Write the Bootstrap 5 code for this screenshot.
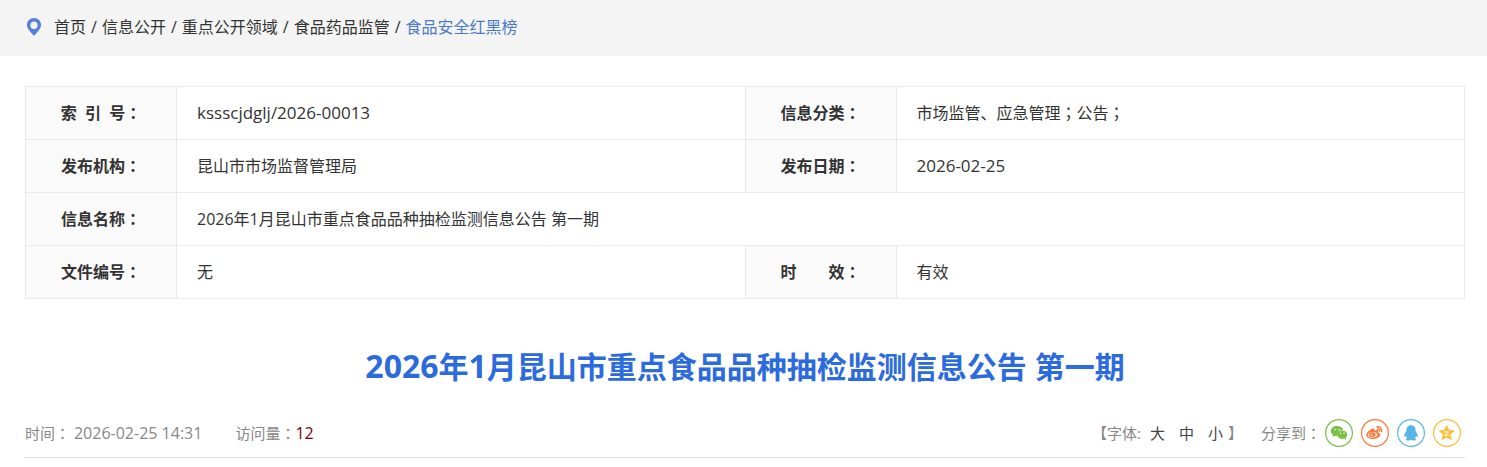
<!DOCTYPE html>
<html lang="zh-CN">
<head>
<meta charset="utf-8">
<meta name="viewport" content="width=device-width, initial-scale=1">
<title>2026年1月昆山市重点食品品种抽检监测信息公告 第一期</title>
<link href="https://cdn.jsdelivr.net/npm/bootstrap@5.3.0/dist/css/bootstrap.min.css" rel="stylesheet">
<style>
body { font-family: "Open Sans", "Noto Sans CJK SC", sans-serif; font-size: 16px; line-height: 24px; color: #333; background: #fff; }
a { color: inherit; text-decoration: none; }
/* full-width punctuation set in the middle of its cell */
.zh-mid { font-family: "Noto Sans CJK TC", sans-serif; line-height: 1; }
.page-gutter { padding-left: 25px; padding-right: 22px; }
.path-bar { background: #f4f4f4; min-height: 56px; padding-bottom: 2px; }
.path-bar .breadcrumb { --bs-breadcrumb-item-padding-x: 5px; --bs-breadcrumb-divider-color: #333; --bs-breadcrumb-item-active-color: #4a7bc8; margin-left: 11px; }
.info-table { table-layout: fixed; border-color: #eaeaea; margin: 30px 0 0; --bs-table-color: #333; }
.info-table th, .info-table td { padding: 14px 20px; line-height: 24px; border: 1px solid #eaeaea; }
.info-table th { background: #fafafa; text-align: center; white-space: nowrap; padding: 14px 0; }
.info-table .col-label { width: 151px; }
.info-table .latin { font-size: 17px; line-height: 1; }
.doc-title { font-size: 30px; line-height: 44px; font-weight: 700; color: #2b6bdd; margin: 46px 0 0; text-align: center; }
.doc-title .num { font-size: 32px; line-height: 1; }
.doc-meta { font-size: 15px; line-height: 22px; color: #888; border-bottom: 1px solid #ddd; margin-top: 30px; padding: 0 4px 10px 0; }
.doc-meta .latin { font-size: 16px; line-height: 1; }
.doc-meta .visit-count { margin-left: 33px; }
.visits { color: #800000; }
.size-links { gap: 14px; color: #444; margin: 0 5px 0 9px; }
.share-label { margin-left: 18px; }
.share-icon { width: 28px; height: 28px; display: block; }
</style>
</head>
<body>
<nav class="path-bar page-gutter d-flex align-items-center" aria-label="breadcrumb">
  <svg width="18" height="20" viewBox="0 0 18 20" aria-hidden="true"><path fill="#5282d8" fill-rule="evenodd" d="M9 1C4.900 1 2 4 2 7.900 2 12.200 6.500 15.500 9 19c2.500-3.500 7-6.800 7-11.100C16 4 13.100 1 9 1Zm0 3.500a3.600 3.800 0 1 1 0 7.600 3.600 3.800 0 0 1 0-7.600Z"/></svg>
  <ol class="breadcrumb mb-0">
    <li class="breadcrumb-item"><a href="#">首页</a></li>
    <li class="breadcrumb-item"><a href="#">信息公开</a></li>
    <li class="breadcrumb-item"><a href="#">重点公开领域</a></li>
    <li class="breadcrumb-item"><a href="#">食品药品监管</a></li>
    <li class="breadcrumb-item active" aria-current="page"><a href="#">食品安全红黑榜</a></li>
  </ol>
</nav>
<main class="page-gutter">
  <table class="table info-table">
    <colgroup><col class="col-label"><col><col class="col-label"><col></colgroup>
    <tbody>
      <tr><th scope="row">索&nbsp;&nbsp;引&nbsp;&nbsp;号<span class="zh-mid" lang="zh-TW">：</span></th><td><span class="latin">kssscjdglj/2026-00013</span></td><th scope="row">信息分类<span class="zh-mid" lang="zh-TW">：</span></th><td>市场监管、应急管理<span class="zh-mid" lang="zh-TW">；</span>公告<span class="zh-mid" lang="zh-TW">；</span></td></tr>
      <tr><th scope="row">发布机构<span class="zh-mid" lang="zh-TW">：</span></th><td>昆山市市场监督管理局</td><th scope="row">发布日期<span class="zh-mid" lang="zh-TW">：</span></th><td><span class="latin">2026-02-25</span></td></tr>
      <tr><th scope="row">信息名称<span class="zh-mid" lang="zh-TW">：</span></th><td colspan="3">2026年1月昆山市重点食品品种抽检监测信息公告 第一期</td></tr>
      <tr><th scope="row">文件编号<span class="zh-mid" lang="zh-TW">：</span></th><td>无</td><th scope="row">时　　效<span class="zh-mid" lang="zh-TW">：</span></th><td>有效</td></tr>
    </tbody>
  </table>
  <h1 class="doc-title"><span class="num">2026</span>年<span class="num">1</span>月昆山市重点食品品种抽检监测信息公告 第一期</h1>
  <div class="doc-meta d-flex flex-wrap justify-content-between align-items-center">
    <div class="d-flex">
      <span>时间<span class="zh-mid" lang="zh-TW">：</span> <span class="latin">2026-02-25 14:31</span></span>
      <span class="visit-count">访问量<span class="zh-mid" lang="zh-TW">：</span><span class="visits latin">12</span></span>
    </div>
    <div class="d-flex align-items-center">
      <span>【字体:</span>
      <span class="size-links d-flex"><a href="#">大</a><a href="#">中</a><a href="#">小</a></span>
      <span>】</span>
      <span class="share-label">分享到<span class="zh-mid" lang="zh-TW">：</span></span>
      <span class="d-flex gap-2 ms-1">
        <a href="#" aria-label="微信"><svg class="share-icon" viewBox="0 0 28 28"><circle cx="14" cy="14" r="13.400" fill="#fff" stroke="#7ac143" stroke-width="1.200"/><path fill="#7ac143" d="M12 7c-3.500 0-6.200 2.200-6.200 5 0 1.600.9 3 2.300 3.900L7.500 18l2.400-1.300c.7.200 1.400.3 2.100.3h.4c-.6-3.500 2.300-6.300 5.800-6.200C17.500 8.600 15 7 12 7Z"/><path fill="#7ac143" d="M17.200 11.400c-2.900 0-5 1.900-5 4.200s2.100 4.300 5 4.300c.6 0 1.200-.1 1.800-.3l2 1.200-.5-1.900c1.100-.8 1.800-2 1.800-3.300 0-2.300-2.200-4.200-5.100-4.200Z"/><g fill="#fff"><circle cx="10" cy="10.500" r=".8"/><circle cx="14.200" cy="10.500" r=".8"/><circle cx="15.600" cy="14.300" r=".7"/><circle cx="19" cy="14.300" r=".7"/></g></svg></a>
        <a href="#" aria-label="微博"><svg class="share-icon" viewBox="0 0 28 28"><circle cx="14" cy="14" r="13.400" fill="#fff" stroke="#ff763b" stroke-width="1.200"/><path fill="#ff763b" fill-rule="evenodd" d="M17 13.600c.7-1.600.2-2.500-1-2.500-.8 0-1.600.2-2.600.6.500-1.600 0-2.400-1.300-2.300-2.600.2-6.800 4-6.800 6.700 0 2.300 3 4 6.600 4 4.200 0 7.300-2.200 7.300-4.300 0-1.200-.9-1.900-2.200-2.200Zm-5.100 5.200c-2.800.2-5-.9-5.100-2.600-.1-1.600 1.900-3.100 4.600-3.300 2.700-.2 4.900.9 5 2.500.1 1.700-1.800 3.200-4.500 3.400Z"/><path fill="#ff763b" fill-rule="evenodd" d="M11.600 13.300c-2.100 0-3.700 1.300-3.700 2.900 0 1.400 1.300 2.300 3.100 2.200 2.100-.1 3.700-1.500 3.600-3 0-1.300-1.200-2.100-3-2.100Zm-1 3.900a1 1 0 1 1 0-2 1 1 0 0 1 0 2Z"/><path fill="none" stroke="#ff763b" stroke-width="1.500" stroke-linecap="round" d="M16.200 7.800c2.800-.5 5 1.900 4.200 4.800M16.600 10.100c1.200-.2 2 .7 1.700 1.900"/></svg></a>
        <a href="#" aria-label="QQ"><svg class="share-icon" viewBox="0 0 28 28"><circle cx="14" cy="14" r="13.400" fill="#fff" stroke="#56b6e7" stroke-width="1.200"/><path fill="#56b6e7" d="M14 6.200c-2.700 0-4.600 2-4.600 4.800v1.200c-1.100 1.500-2.200 3.200-2.200 4.900 0 .7.300 1.100.7 1 .4-.1.800-.6 1.100-1 .2.800.6 1.500 1.100 2.100-.8.300-1.300.8-1.300 1.300 0 .8 1.200 1.100 2.500 1.100 1.200 0 2.200-.3 2.700-.8.500.5 1.500.8 2.700.8 1.300 0 2.500-.3 2.500-1.100 0-.5-.5-1-1.300-1.300.5-.6.900-1.300 1.100-2.100.3.400.7.900 1.100 1 .4.100.7-.3.700-1 0-1.700-1.100-3.400-2.200-4.900V11c0-2.800-1.900-4.800-4.600-4.800Z"/></svg></a>
        <a href="#" aria-label="QQ空间"><svg class="share-icon" viewBox="0 0 28 28"><circle cx="14" cy="14" r="13.400" fill="#fff" stroke="#fdbe3d" stroke-width="1.200"/><path fill="#fdbe3d" stroke="#fdbe3d" stroke-width="1.400" stroke-linejoin="round" d="m13.700 7 1.900 4.600 5 .4-3.800 3.300 1.200 4.900-4.300-2.600-4.300 2.600 1.200-4.900L6.800 12l5-.4Z"/><path fill="none" stroke="#fff" stroke-width=".9" d="M11 12.900c1.700-.2 3.300-.2 4.900 0l-4.300 3.200c1.400.3 3 .4 4.800.1"/></svg></a>
      </span>
    </div>
  </div>
</main>
<script src="https://cdn.jsdelivr.net/npm/bootstrap@5.3.0/dist/js/bootstrap.bundle.min.js"></script>
</body>
</html>
